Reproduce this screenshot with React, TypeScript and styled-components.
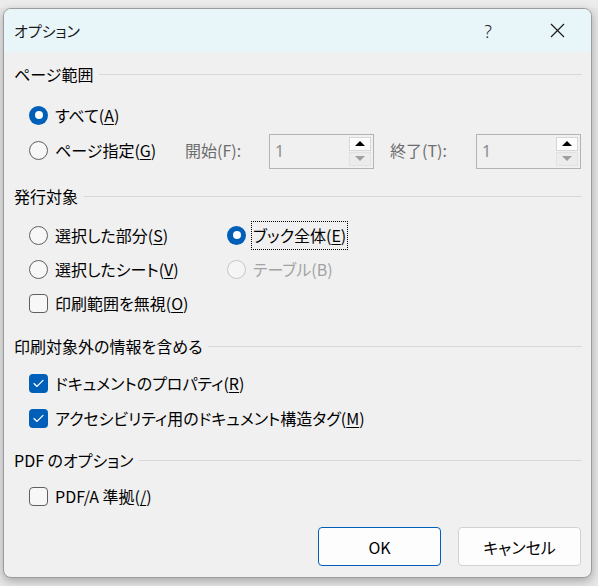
import React from 'react';
import styled, { createGlobalStyle } from 'styled-components';

const Global = createGlobalStyle`
  html, body { margin: 0; padding: 0; }
  body {
    background: #e6e6e6;
    font-family: "Noto Sans CJK JP", "Noto Sans", sans-serif;
    font-feature-settings: "palt";
    width: 598px; height: 586px; overflow: hidden;
    color: #000;
  }
`;

const Stage = styled.div`
  width: 598px; height: 586px; box-sizing: border-box;
  padding: 8px 7px 0 3px;
  background: linear-gradient(#ececec 0 8px, #e6e6e6 8px);
`;

const Dialog = styled.div`
  width: 589px; height: 570px; box-sizing: border-box;
  border: 1px solid #9c9c9c; border-radius: 8px;
  background: #f0f0f0;
  box-shadow: 0 3px 10px rgba(0,0,0,0.28);
  overflow: hidden;
  display: flex; flex-direction: column;
`;

const TitleBar = styled.div`
  flex: none; height: 43px; background: #e8f6f9;
  display: flex; align-items: center; padding-left: 10px;
`;
const Title = styled.div`
  flex: 1; font-size: 15px; color: #1b1b1b;
`;
const TitleButton = styled.div<{ $w: number }>`
  width: ${p => p.$w}px; height: 43px;
  display: flex; align-items: center; justify-content: center;
  font-size: 18px; font-weight: 300; color: #1b1b1b;
  font-family: "Noto Sans", sans-serif;
`;

const Body = styled.div`
  flex: 1; display: flex; flex-direction: column;
  padding: 10px 9px 11px 10px;
`;

const Section = styled.div<{ $mb: number; $pt: number }>`
  display: flex; flex-direction: column;
  margin-bottom: ${p => p.$mb}px;
  & > div:nth-child(2) { padding-top: ${p => p.$pt}px; }
`;

const Heading = styled.div`
  height: 24px; display: flex; align-items: center; gap: 6px;
  font-size: 16px; white-space: nowrap;
  &::after { content: ""; flex: 1; border-top: 1px solid #d8d8d8; margin-top: 1px; }
`;

const List = styled.div`
  display: flex; flex-direction: column; padding-left: 15px;
`;

const Row = styled.div<{ $h: number }>`
  height: ${p => p.$h}px; display: flex; align-items: center;
`;

const Grid = styled.div`
  display: grid; grid-template-columns: 198px 1fr; grid-auto-rows: 34px;
  align-items: center; padding-left: 15px;
`;

const Option = styled.label<{ $w?: number; $disabled?: boolean }>`
  display: flex; align-items: center; gap: 7px;
  font-size: 16px; white-space: nowrap;
  color: ${p => (p.$disabled ? '#a3a3a3' : '#000')};
  ${p => (p.$w ? `width: ${p.$w}px;` : '')}
`;

const Text = styled.span<{ $focus?: boolean }>`
  padding: 1px 1px 2px 1px;
  border: 1px ${p => (p.$focus ? 'dotted #000' : 'solid transparent')};
  margin-left: -2px;
`;

const Key = styled.span`
  text-decoration: underline; text-underline-offset: 2px; text-decoration-thickness: 1px;
`;

const RadioCircle = styled.span<{ $on?: boolean; $disabled?: boolean }>`
  flex: none; width: 19px; height: 19px; box-sizing: border-box; border-radius: 50%;
  display: flex; align-items: center; justify-content: center;
  ${p => p.$on
    ? 'background: #005fb8; border: none;'
    : p.$disabled
      ? 'background: #f5f5f5; border: 1px solid #c6c6c6;'
      : 'background: #f7f7f7; border: 1px solid #5f5f5f;'}
  &::after {
    content: ""; display: ${p => (p.$on ? 'block' : 'none')};
    width: 8px; height: 8px; border-radius: 50%; background: #fff;
  }
`;

const CheckBox = styled.span<{ $on?: boolean }>`
  flex: none; width: 19px; height: 19px; box-sizing: border-box; border-radius: 4px;
  display: flex; align-items: center; justify-content: center;
  ${p => p.$on ? 'background: #005fb8; border: none;' : 'background: #f7f7f7; border: 1px solid #5f5f5f;'}
`;

const FieldLabel = styled.span<{ $w: number }>`
  width: ${p => p.$w}px; font-size: 16px; color: #6d6d6d; white-space: nowrap;
`;

const SpinBox = styled.div`
  width: 105px; height: 35px; box-sizing: border-box;
  border: 1px solid #b4b4b4; background: #f0f0f0;
  display: flex; align-items: center; justify-content: space-between;
  padding: 0 2px 0 5px; margin-top: 2px;
`;
const SpinValue = styled.span`
  font-size: 16px; color: #8d8d8d; font-family: "Noto Sans", sans-serif;
`;
const SpinButtons = styled.div`
  display: flex; flex-direction: column; gap: 1px; width: 22px;
`;
const SpinButton = styled.div<{ $up?: boolean }>`
  height: 14px; box-sizing: border-box;
  display: flex; align-items: center; justify-content: center;
  background: ${p => (p.$up ? '#fdfdfd' : '#ececec')};
  border: 1px solid ${p => (p.$up ? '#d6d6d6' : '#e2e2e2')};
  &::after {
    content: ""; width: 0; height: 0;
    border-left: 5px solid transparent; border-right: 5px solid transparent;
    ${p => p.$up ? 'border-bottom: 5px solid #000;' : 'border-top: 5px solid #a0a0a0;'}
  }
`;

const ButtonRow = styled.div`
  margin-top: auto; display: flex; justify-content: flex-end; gap: 17px; padding-right: 1px;
`;
const Button = styled.button<{ $primary?: boolean }>`
  width: 123px; height: 39px; box-sizing: border-box;
  border-radius: 4px; background: #fdfdfd;
  border: 1px solid ${p => (p.$primary ? '#005fb8' : '#d2d2d2')};
  font-family: "Noto Sans CJK JP", "Noto Sans", sans-serif; font-feature-settings: "palt";
  font-size: 16px; color: #000;
`;

const Check = () => (
  <svg width="11" height="9" viewBox="0 0 11 9">
    <path d="M1 4.6 L4 7.4 L10 1.4" fill="none" stroke="#fff" strokeWidth="1.3" strokeLinecap="round" strokeLinejoin="round" />
  </svg>
);

const CloseIcon = () => (
  <svg width="15" height="15" viewBox="0 0 15 15">
    <path d="M1 1 L14 14 M14 1 L1 14" stroke="#1b1b1b" strokeWidth="1.2" />
  </svg>
);

const Spin = () => (
  <SpinBox>
    <SpinValue>1</SpinValue>
    <SpinButtons>
      <SpinButton $up />
      <SpinButton />
    </SpinButtons>
  </SpinBox>
);

export default function App() {
  return (
    <Stage>
      <Global />
      <Dialog>
        <TitleBar>
          <Title>オプション</Title>
          <TitleButton $w={70}>?</TitleButton>
          <TitleButton $w={68}><CloseIcon /></TitleButton>
        </TitleBar>
        <Body>
          <Section $mb={16} $pt={12}>
            <Heading>ページ範囲</Heading>
            <List>
              <Row $h={34}>
                <Option><RadioCircle $on /><Text>すべて(<Key>A</Key>)</Text></Option>
              </Row>
              <Row $h={36}>
                <Option $w={156}><RadioCircle /><Text>ページ指定(<Key>G</Key>)</Text></Option>
                <FieldLabel $w={84}>開始(F):</FieldLabel>
                <Spin />
                <FieldLabel $w={86} style={{ marginLeft: 16 }}>終了(T):</FieldLabel>
                <Spin />
              </Row>
            </List>
          </Section>
          <Section $mb={14} $pt={10}>
            <Heading>発行対象</Heading>
            <Grid>
              <Option><RadioCircle /><Text>選択した部分(<Key>S</Key>)</Text></Option>
              <Option><RadioCircle $on /><Text $focus>ブック全体(<Key>E</Key>)</Text></Option>
              <Option><RadioCircle /><Text>選択したシート(<Key>V</Key>)</Text></Option>
              <Option $disabled><RadioCircle $disabled /><Text>テーブル(B)</Text></Option>
              <Option><CheckBox /><Text>印刷範囲を無視(<Key>O</Key>)</Text></Option>
            </Grid>
          </Section>
          <Section $mb={12} $pt={8}>
            <Heading>印刷対象外の情報を含める</Heading>
            <List>
              <Row $h={35}>
                <Option><CheckBox $on><Check /></CheckBox><Text>ドキュメントのプロパティ(<Key>R</Key>)</Text></Option>
              </Row>
              <Row $h={35}>
                <Option><CheckBox $on><Check /></CheckBox><Text>アクセシビリティ用のドキュメント構造タグ(<Key>M</Key>)</Text></Option>
              </Row>
            </List>
          </Section>
          <Section $mb={0} $pt={7}>
            <Heading>PDF のオプション</Heading>
            <List>
              <Row $h={34}>
                <Option><CheckBox /><Text>PDF/A 準拠(<Key>/</Key>)</Text></Option>
              </Row>
            </List>
          </Section>
          <ButtonRow>
            <Button $primary>OK</Button>
            <Button>キャンセル</Button>
          </ButtonRow>
        </Body>
      </Dialog>
    </Stage>
  );
}
